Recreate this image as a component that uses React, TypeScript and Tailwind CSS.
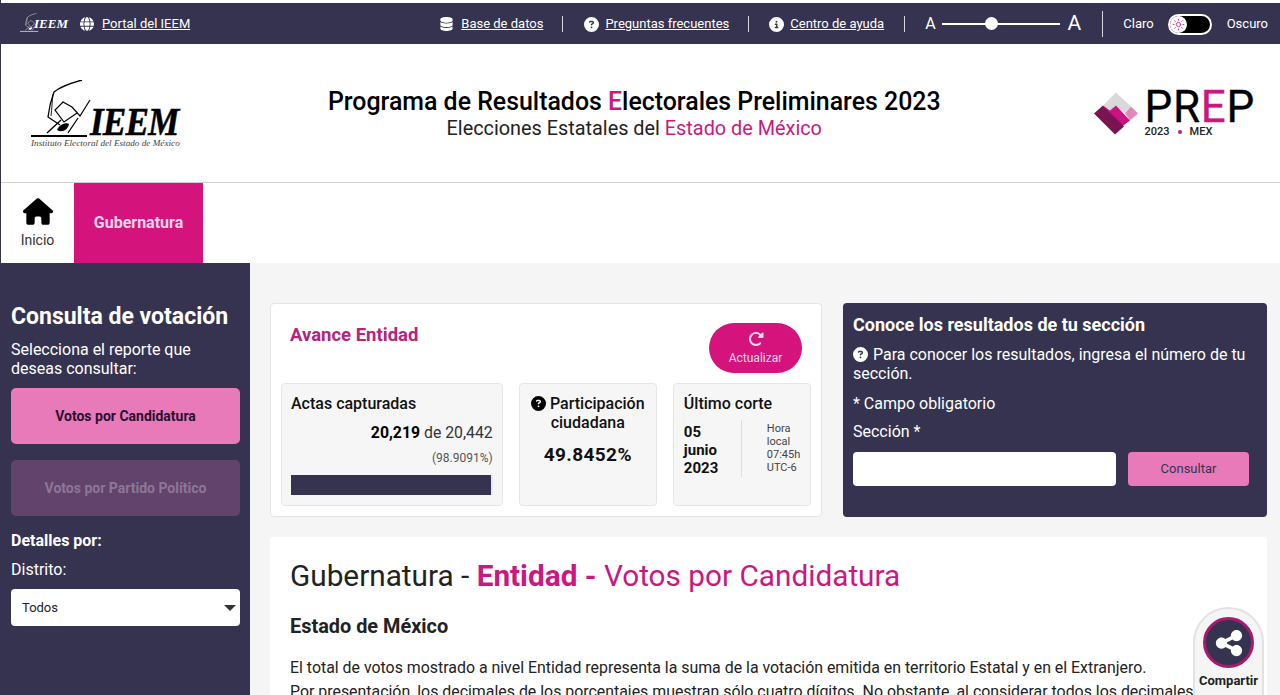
import React from 'react';
import { Sun } from 'lucide-react';
import { FaCircleQuestion, FaCircleInfo, FaHouse, FaShareNodes, FaRotateRight, FaDatabase, FaGlobe } from 'react-icons/fa6';

const Divider = () => <span className="w-px h-[16px] bg-white/80" />;

const HandMark = ({ className }: { className?: string }) => (
  <svg viewBox="0 0 74 60" className={className} fill="none" stroke="currentColor">
    <path d="M51 0 C40 3 30 6 23 12 C20 20 18 28 17 37 L29 45" strokeWidth="1.3" />
    <path d="M22 14 C21 22 21 28 20 36" strokeWidth="0.9" />
    <path d="M59 20 L49 36 L41 27 L32 22 L24 30 L33 42 L46 33" strokeWidth="1.2" />
    <path d="M16 53 L30 40 M47 38 L37 53" strokeWidth="1.3" />
    <path d="M26 50 C28 44 36 42 38 44 C37 50 31 53 26 50 Z" fill="currentColor" stroke="none" />
    <path d="M0 56 H56" strokeWidth="2" />
  </svg>
);

const IeemLogo = () => (
  <div className="w-[152px] mt-[3px] text-black">
    <div className="relative h-[57px]">
      <HandMark className="absolute left-0 top-0 w-[74px] h-[60px]" />
      <span className="absolute left-[59px] top-[27px] font-['Liberation_Serif',serif] italic font-bold text-[40px] leading-[30px] tracking-[-1px] scale-x-[0.88] origin-left [-webkit-text-stroke:0.5px_black]">IEEM</span>
    </div>
    <p className="font-['Liberation_Serif',serif] italic text-[9.2px] leading-[12px] text-[#444] whitespace-nowrap">Instituto Electoral del Estado de México</p>
  </div>
);

const PrepLogo = () => (
  <div className="flex items-center">
    <svg viewBox="0 0 44 42" className="w-[44px] h-[43px] mr-[7px]">
      <path d="M22 0 L37 14 L31 21 L22 13 L16 18 L9 13 Z" fill="#d9d9d9" />
      <path d="M37 14 L44 21 L36 28 L31 21 Z" fill="#e089b8" />
      <path d="M9 13 L16 18 L22 13 L36 28 L28 34 Z" fill="#c9137e" />
      <path d="M9 13 L30 34 L21 42 L0 21 Z" fill="#7a1450" />
    </svg>
    <div className="text-black font-['Roboto',sans-serif]">
      <div className="text-[44px] leading-[38px] tracking-[0.7px] [-webkit-text-stroke:0.3px_currentColor]">PR<span className="text-[#c9187f]">E</span>P</div>
      <div className="text-[11px] leading-[12px] font-medium flex items-center text-[#222]">
        <span>2023</span>
        <span className="w-[4px] h-[4px] rounded-full bg-[#c9187f] mx-[8px]" />
        <span>MEX</span>
      </div>
    </div>
  </div>
);

const TopBar = () => (
  <div className="h-[44px] bg-[#35334f] border-t-[3px] border-white flex items-center text-white text-[13px] pl-[19px] pr-[12px] pt-[1px]">
    <div className="w-[50px] h-[22px] relative text-white mr-[10px]">
      <HandMark className="absolute left-0 top-0 w-[24px] h-[20px]" />
      <span className="absolute left-[14px] top-[4px] font-['Liberation_Serif',serif] italic font-bold text-[13px] leading-[14px]">IEEM</span>
    </div>
    <FaGlobe className="w-[14px] h-[14px] mr-[8px]" />
    <a className="underline">Portal del IEEM</a>
    <div className="ml-auto flex items-center">
      <FaDatabase className="w-[13px] h-[14px] mr-[8px]" />
      <a className="underline mr-[19px]">Base de datos</a>
      <Divider />
      <FaCircleQuestion className="w-[15px] h-[15px] ml-[21px] mr-[6px]" />
      <a className="underline mr-[19px]">Preguntas frecuentes</a>
      <Divider />
      <FaCircleInfo className="w-[15px] h-[15px] ml-[20px] mr-[6px]" />
      <a className="underline mr-[20px]">Centro de ayuda</a>
      <Divider />
      <span className="text-[16px] ml-[20px] mr-[5px]">A</span>
      <div className="relative w-[118px] h-[2px] mx-[1px] bg-white">
        <span className="absolute left-[43px] top-[-6px] w-[13px] h-[13px] rounded-full bg-white" />
      </div>
      <span className="text-[21px] ml-[7px] mr-[21px]">A</span>
      <span className="w-px h-[26px] bg-white/80" />
      <span className="ml-[20px] mr-[14px]">Claro</span>
      <div className="w-[44px] h-[21px] rounded-full bg-black border-2 border-white flex items-center">
        <span className="w-[17px] h-[17px] rounded-full bg-white flex items-center justify-center">
          <Sun className="w-[13px] h-[13px] text-[#c9187f]" strokeWidth={1.5} />
        </span>
      </div>
      <span className="ml-[15px]">Oscuro</span>
    </div>
  </div>
);

const Header = () => (
  <div className="h-[139px] bg-white border-b border-[#cfcfcf] flex items-center pl-[30px] pr-[25px]">
    <IeemLogo />
    <div className="flex-1 text-center text-black mt-[3px] pr-[8px]">
      <h1 className="text-[24.9px] leading-[28px] font-medium whitespace-nowrap">
        Programa de Resultados <span className="text-[#c9187f]">E</span>lectorales Preliminares 2023
      </h1>
      <p className="text-[19.85px] leading-[25px] text-[#222]">
        Elecciones Estatales del <span className="text-[#c9187f]">Estado de México</span>
      </p>
    </div>
    <PrepLogo />
  </div>
);

const Nav = () => (
  <div className="h-[80px] bg-white flex">
    <div className="w-[73px] flex flex-col items-center pt-[15px] text-[#333]">
      <FaHouse className="w-[30px] h-[27px] text-black" />
      <span className="text-[14px] leading-[20px] mt-[5px]">Inicio</span>
    </div>
    <div className="w-[129px] bg-[#d4147c] text-[#fbd5ea] font-bold text-[16px] flex items-center justify-center">Gubernatura</div>
  </div>
);

const Sidebar = () => (
  <aside className="w-[249px] shrink-0 bg-[#35334f] px-[10px] pt-[39px] text-white">
    <h2 className="text-[23px] leading-[30px] font-bold whitespace-nowrap">Consulta de votación</h2>
    <p className="text-[16px] leading-[19px] mt-[8px]">Selecciona el reporte que deseas consultar:</p>
    <button className="w-full h-[56px] mt-[10px] rounded-[5px] bg-[#e87ab9] text-[#2b1030] text-[14px] font-bold">Votos por Candidatura</button>
    <button className="w-full h-[56px] mt-[16px] rounded-[5px] bg-[#62436c] text-[#8d7797] text-[14px] font-bold">Votos por Partido Político</button>
    <p className="text-[16px] leading-[20px] font-bold mt-[15px]">Detalles por:</p>
    <p className="text-[16px] leading-[20px] mt-[9px]">Distrito:</p>
    <div className="h-[37px] mt-[9px] rounded-[4px] bg-white text-[#222] text-[13px] flex items-center justify-between pl-[11px] pr-[4px]">
      <span>Todos</span>
      <span className="w-0 h-0 border-x-[6px] border-x-transparent border-t-[6px] border-t-[#333]" />
    </div>
  </aside>
);

const StatBox = ({ className, children }: { className: string; children: React.ReactNode }) => (
  <div className={`h-[123px] rounded-[4px] border border-[#e6e6e6] bg-[#f6f6f6] ${className}`}>{children}</div>
);

const Avance = () => (
  <section className="w-[552px] h-[214px] bg-white rounded-[4px] border border-[#e4e4e4] px-[10px]">
    <div className="flex justify-between h-[79px]">
      <h3 className="text-[18.5px] leading-[24px] font-bold text-[#b6237f] ml-[9px] mt-[19px]">Avance Entidad</h3>
      <button className="w-[93px] h-[50px] mt-[19px] mr-[9px] rounded-full bg-[#d4147c] text-[#fbd5ea] flex flex-col items-center pt-[8px]">
        <FaRotateRight className="w-[16px] h-[16px]" />
        <span className="text-[12px] leading-[14px] mt-[4px]">Actualizar</span>
      </button>
    </div>
    <div className="flex gap-[16px]">
      <StatBox className="w-[223px] px-[9px] pt-[9px]">
        <p className="text-[16px] leading-[22px] font-medium text-[#111]">Actas capturadas</p>
        <p className="text-right text-[15.8px] leading-[20px] mt-[8px] text-[#333]"><b className="text-black">20,219</b> de 20,442</p>
        <p className="text-right text-[12px] leading-[16px] mt-[7px] text-[#555]">(98.9091%)</p>
        <div className="h-[20px] mt-[9px] bg-[#e8e8ee]"><div className="h-full w-[99%] bg-[#35334f]" /></div>
      </StatBox>
      <StatBox className="w-[139px] pt-[10px] text-center">
        <p className="text-[16px] leading-[19px] font-medium text-[#111]">
          <FaCircleQuestion className="inline w-[15px] h-[15px] mr-[4px] align-[-2px] text-black" />Participación
          <br />ciudadana
        </p>
        <p className="text-[19px] leading-[24px] font-bold tracking-[0.4px] mt-[11px] text-[#111]">49.8452%</p>
      </StatBox>
      <StatBox className="w-[139px] pl-[10px] pt-[9px]">
        <p className="text-[16px] leading-[22px] font-medium text-[#111]">Último corte</p>
        <div className="flex mt-[5px]">
          <p className="w-[57px] text-[15px] leading-[18px] font-bold text-[#111] pt-[3px] border-r border-[#ddd] h-[54px] box-content">05<br />junio<br />2023</p>
          <p className="pl-[25px] text-[11px] leading-[13px] text-[#444] pt-[2px]">Hora<br />local<br />07:45h<br />UTC-6</p>
        </div>
      </StatBox>
    </div>
  </section>
);

const Conoce = () => (
  <section className="w-[424px] h-[214px] bg-[#35334f] rounded-[4px] text-white px-[10px] pt-[10px]">
    <h3 className="text-[18px] leading-[24px] font-bold">Conoce los resultados de tu sección</h3>
    <p className="text-[16px] leading-[19px] mt-[8px]">
      <FaCircleQuestion className="inline w-[15px] h-[15px] mr-[5px] align-[-2px]" />Para conocer los resultados, ingresa el número de tu sección.
    </p>
    <p className="text-[16px] leading-[20px] mt-[11px]">* Campo obligatorio</p>
    <p className="text-[16px] leading-[20px] mt-[8px]">Sección *</p>
    <div className="flex justify-between mt-[10px] mr-[8px]">
      <div className="w-[263px] h-[34px] rounded-[4px] bg-white" />
      <button className="w-[121px] h-[34px] rounded-[4px] bg-[#e87ab9] text-[#35334f] text-[13px]">Consultar</button>
    </div>
  </section>
);

export default function App() {
  return (
    <div className="relative h-[695px] w-[1280px] overflow-hidden bg-[#f5f5f5] font-['Roboto',sans-serif] border-l border-[#35334f]">
      <TopBar />
      <Header />
      <Nav />
      <div className="flex h-[432px]">
        <Sidebar />
        <main className="flex-1 pl-[20px] pr-[13px] pt-[40px] min-w-0">
          <div className="flex justify-between">
            <Avance />
            <Conoce />
          </div>
          <section className="mt-[20px] h-[300px] bg-white rounded-[4px] pl-[20px] pr-[20px] pt-[21px] overflow-hidden">
            <h2 className="text-[29.75px] leading-[36px] text-[#222]">
              Gubernatura - <b className="font-bold text-[#c9187f]">Entidad - </b><span className="text-[#c9187f]">Votos por Candidatura</span>
            </h2>
            <h3 className="text-[19.9px] leading-[24px] font-bold text-[#222] mt-[21px]">Estado de México</h3>
            <p className="text-[15.9px] leading-[24px] text-[#222] mt-[17px]">El total de votos mostrado a nivel Entidad representa la suma de la votación emitida en territorio Estatal y en el Extranjero.</p>
            <p className="text-[15.9px] leading-[24px] text-[#222]">Por presentación, los decimales de los porcentajes muestran sólo cuatro dígitos. No obstante, al considerar todos los decimales, suman 100%.</p>
          </section>
        </main>
      </div>
      <div className="absolute left-[1192px] top-[607px] w-[71px] h-[100px] rounded-t-full bg-[#f5f5f5] border-2 border-[#e2e2e2] flex flex-col items-center pt-[8px]">
        <span className="w-[51px] h-[51px] rounded-full bg-[#35334f] border-[3px] border-[#a81a70] flex items-center justify-center">
          <FaShareNodes className="w-[30px] h-[30px] text-white" />
        </span>
        <span className="text-[13px] leading-[16px] font-bold text-[#222] mt-[5px]">Compartir</span>
      </div>
    </div>
  );
}
